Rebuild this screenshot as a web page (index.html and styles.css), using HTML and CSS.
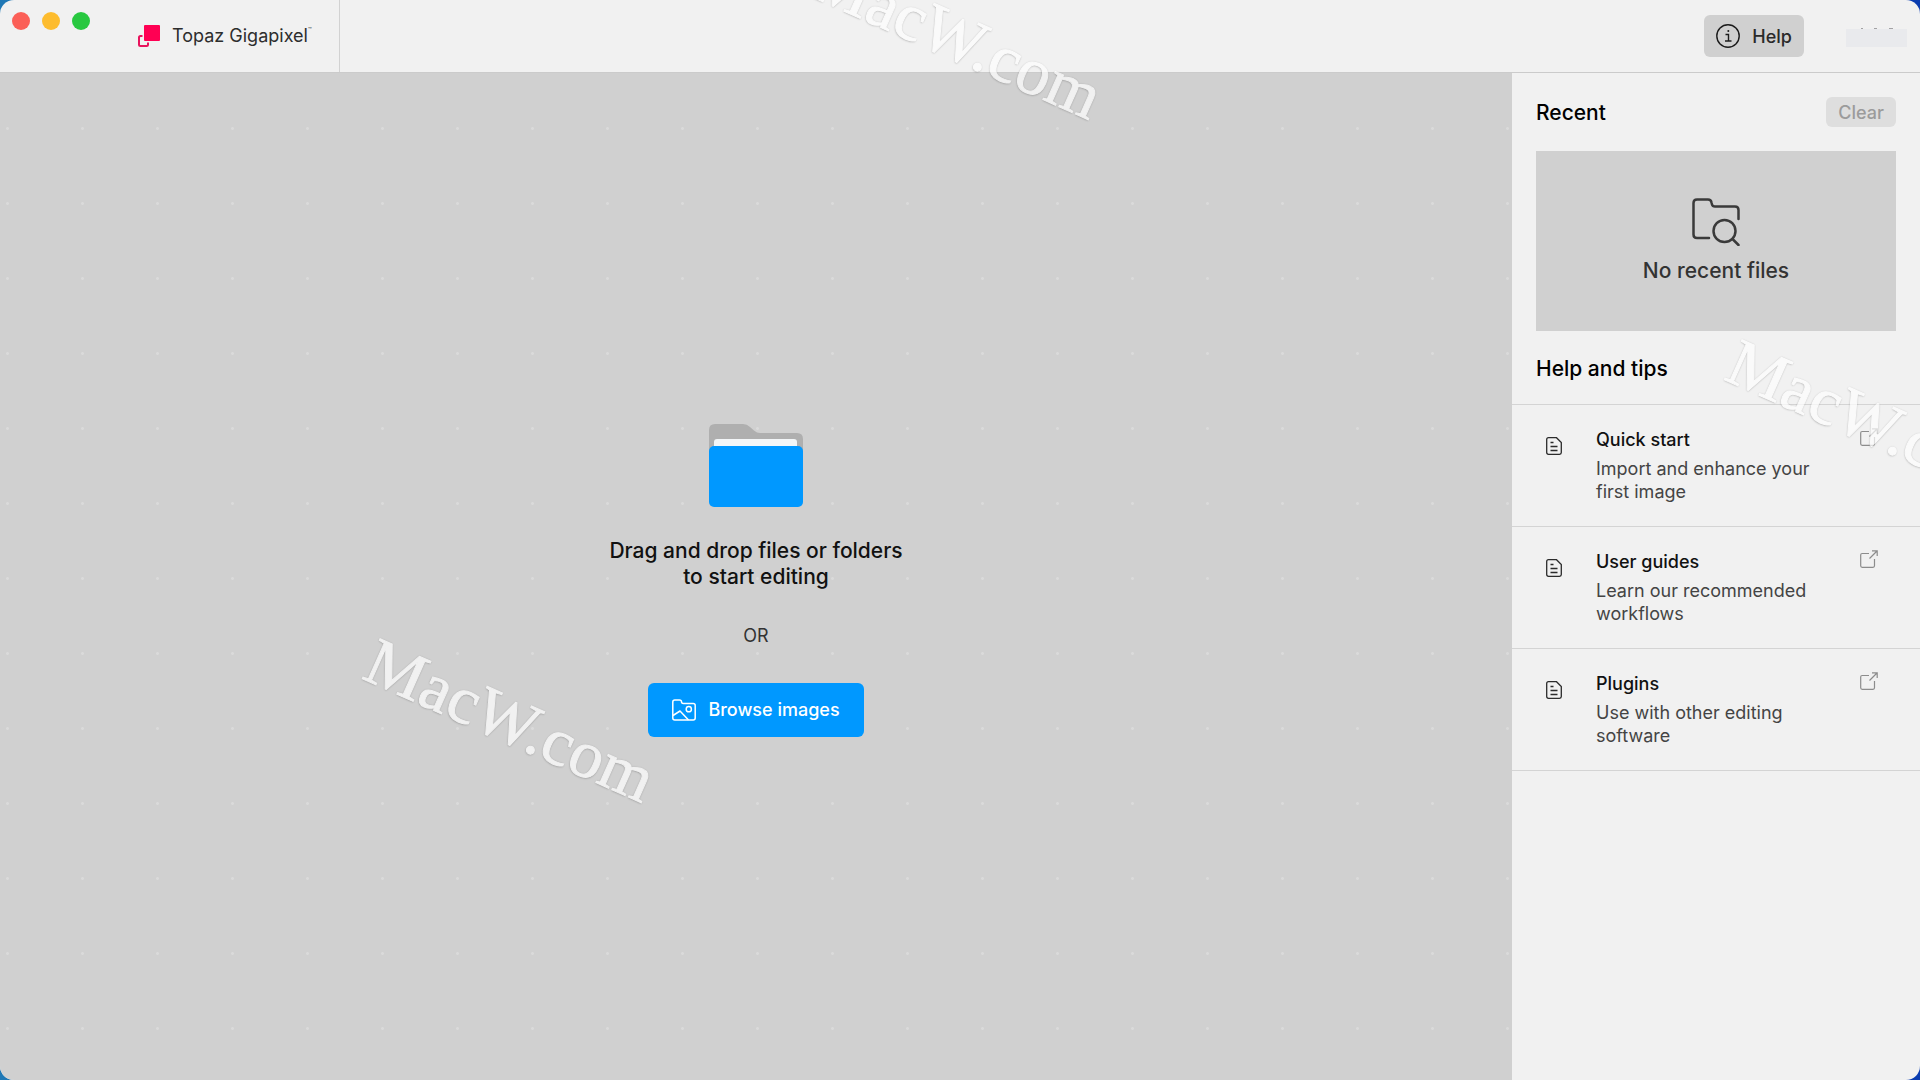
FILE: index.html
```
<!DOCTYPE html>
<html lang="en">
<head>
    <meta charset="UTF-8">
    <meta name="viewport" content="width=device-width, initial-scale=1.0">
    <title>Topaz Gigapixel</title>
    <link rel="stylesheet" href="styles.css">
</head>
<body>
    <div class="window">
        <header class="titlebar">
            <div class="brand">
                <div class="lights">
                    <button class="light close" aria-label="Close"></button>
                    <button class="light minimize" aria-label="Minimize"></button>
                    <button class="light zoom" aria-label="Zoom"></button>
                </div>
                <svg class="logo" width="22" height="22" viewBox="0 0 22 22" aria-hidden="true">
                    <path d="M4.5 11H2.500Q1 11 1 12.500V19.500Q1 21 2.500 21H8.500Q10 21 10 19.500V17.500" fill="none" stroke="#e8135c" stroke-width="2"/>
                    <rect x="6" y="0" width="16" height="16" rx="1" fill="#ff0053"/>
                </svg>
                <h1 class="app-name">Topaz Gigapixel<span class="tm">™</span></h1>
            </div>
            <div class="actions">
                <button class="help-button">
                    <svg width="24" height="24" viewBox="0 0 24 24" fill="none" stroke="#1c1c1c" stroke-width="1.4" aria-hidden="true">
                        <circle cx="12" cy="12" r="11.200"/>
                        <path d="M9.500 10.500H12.500V16.700M9 17H15.500"/>
                        <circle cx="12.300" cy="7" r="1" fill="#1c1c1c" stroke="none"/>
                    </svg>
                    Help
                </button>
                <svg class="account" width="62" height="22" viewBox="0 0 62 22" aria-hidden="true">
                    <rect y="4" width="61" height="18" fill="#e9eaed"/>
                    <path d="M15 3.500H17M28 3.500H31M43 3.500H47" stroke="#a2a2a4" stroke-width="1"/>
                </svg>
            </div>
        </header>

        <div class="content">
            <main class="canvas">
                <svg class="folder" width="94" height="83" viewBox="0 0 94 83" aria-hidden="true">
                    <path d="M0 30V6Q0 0 6 0H34Q38 0 41 3L45 6.500Q48 9 51 9H88Q94 9 94 15V30Z" fill="#afafaf"/>
                    <path d="M5 30V18Q5 15 8 15H85Q88 15 88 18V30Z" fill="#f3f6f8"/>
                    <rect y="22" width="94" height="61" rx="5" fill="#0098ff"/>
                </svg>
                <p class="drop-text">Drag and drop files or folders<br>to start editing</p>
                <p class="or">OR</p>
                <button class="browse-button">
                    <svg width="24" height="22" viewBox="0 0 24 22" fill="none" stroke="#fff" stroke-width="1.5" stroke-linejoin="round" aria-hidden="true">
                        <path d="M.8 19V3Q.8 1 2.800 1H7.500Q9.500 1 9.500 2.800Q9.500 4.500 11.300 4.500H21.200Q23.200 4.500 23.200 6.500V19Q23.200 21 21.200 21H2.800Q.8 21 .8 19Z"/>
                        <path d="M1 16.500L8 12L16.500 21"/>
                        <circle cx="16.800" cy="10.200" r="2.600"/>
                    </svg>
                    Browse images
                </button>
            </main>

            <aside class="sidebar">
                <section class="recent">
                    <div class="recent-header">
                        <h2>Recent</h2>
                        <button class="clear-button" disabled>Clear</button>
                    </div>
                    <div class="recent-empty">
                        <svg width="48" height="48" viewBox="0 0 48 48" fill="none" stroke="#3a3a3a" stroke-width="2.500" stroke-linecap="round" stroke-linejoin="round" aria-hidden="true">
                            <path d="M17 40H5Q1.500 40 1.500 36.500V5Q1.500 1.500 5 1.500H16Q19 1.500 19.500 4.500L20 6.500Q20.500 8.500 23 8.500H43Q46.500 8.500 46.500 12V21"/>
                            <circle cx="32.500" cy="33" r="11"/>
                            <path d="M40.500 41L46.500 47"/>
                        </svg>
                        <p>No recent files</p>
                    </div>
                </section>

                <h2 class="tips-title">Help and tips</h2>
                <nav class="tips">
                    <a class="tip" href="#quick-start">
                        <svg class="doc-icon" width="16" height="18" viewBox="0 0 16 18"><use href="#doc"/></svg>
                        <div class="tip-text">
                            <h3>Quick start</h3>
                            <p>Import and enhance your first image</p>
                        </div>
                        <svg class="open-icon" width="18" height="18" viewBox="0 0 18 18"><use href="#open"/></svg>
                    </a>
                    <a class="tip" href="#user-guides">
                        <svg class="doc-icon" width="16" height="18" viewBox="0 0 16 18"><use href="#doc"/></svg>
                        <div class="tip-text">
                            <h3>User guides</h3>
                            <p>Learn our recommended workflows</p>
                        </div>
                        <svg class="open-icon" width="18" height="18" viewBox="0 0 18 18"><use href="#open"/></svg>
                    </a>
                    <a class="tip" href="#plugins">
                        <svg class="doc-icon" width="16" height="18" viewBox="0 0 16 18"><use href="#doc"/></svg>
                        <div class="tip-text">
                            <h3>Plugins</h3>
                            <p>Use with other editing software</p>
                        </div>
                        <svg class="open-icon" width="18" height="18" viewBox="0 0 18 18"><use href="#open"/></svg>
                    </a>
                </nav>
            </aside>
        </div>

        <!-- watermarks float over everything -->
        <span class="watermark mark-top">MacW.com</span>
        <span class="watermark mark-left">MacW.com</span>
        <span class="watermark mark-right">MacW.com</span>
    </div>

    <!-- shared icons -->
    <svg class="sprite" width="0" height="0" aria-hidden="true">
        <symbol id="doc" viewBox="0 0 16 18">
            <path d="M2.500 .7H10.500L15.300 5.500V15.500Q15.300 17.300 13.500 17.300H2.500Q.7 17.300 .7 15.500V2.500Q.7 .7 2.500 .7Z" fill="none" stroke="#2b2b2b" stroke-width="1.300"/>
            <path d="M4.500 5.500H7.500M4.500 9.500H11.500M4.500 13.500H11.500" stroke="#2b2b2b" stroke-width="1.300"/>
        </symbol>
        <symbol id="open" viewBox="0 0 18 18">
            <path d="M9 3.500H2.200Q.7 3.500 .7 5V15.800Q.7 17.300 2.200 17.300H13Q14.500 17.300 14.500 15.800V9" fill="none" stroke="#8c8c8c" stroke-width="1.200"/>
            <path d="M9.500 8.500L17 1M12 .9H17.200V6" fill="none" stroke="#8c8c8c" stroke-width="1.200"/>
        </symbol>
    </svg>
</body>
</html>
```
FILE: styles.css
```
* {
    box-sizing: border-box;
}

body {
    margin: 0;
    font-family: Inter, "Liberation Sans", sans-serif;
    font-size: 18px;
    color: #111;
    background: linear-gradient(90deg, #1f78b5, #0a3cb0);
}

h1, h2, h3, p {
    margin: 0;
}

button {
    font-family: inherit;
    border: none;
    padding: 0;
}

.window {
    position: relative;
    display: flex;
    flex-direction: column;
    min-height: 100vh;
    border-radius: 14px;
    overflow: hidden;
    background-color: #f1f1f1;
}

/* title bar */
.titlebar {
    display: flex;
    justify-content: space-between;
    height: 73px;
    border-bottom: 1px solid #cbcbcb;
}

.brand {
    display: flex;
    align-items: center;
    width: 340px;
    padding-left: 12px;
    border-right: 1px solid #d2d2d2;
}

.lights {
    display: flex;
    gap: 12px;
    align-self: flex-start;
    margin-top: 12px;
    margin-right: 48px;
}

.light {
    width: 18px;
    height: 18px;
    border-radius: 50%;
}

.close {
    background-color: #fb5f57;
}

.minimize {
    background-color: #fdbc2e;
}

.zoom {
    background-color: #28c840;
}

.logo {
    margin-right: 12px;
}

.app-name {
    position: relative;
    font-size: 18px;
    font-weight: 400;
    line-height: 24px;
    color: #2d2d2d;
}

.tm {
    position: absolute;
    left: 100%;
    top: 0;
    font-size: 6px;
    line-height: 12px;
}

.actions {
    display: flex;
    align-items: center;
    gap: 42px;
    padding-right: 12px;
}

.help-button {
    display: flex;
    align-items: center;
    gap: 12px;
    height: 42px;
    padding: 0 12px;
    border-radius: 6px;
    font-size: 18px;
    font-weight: 500;
    color: #2a2a2a;
    background-color: #d0d0d0;
}

/* main area */
.content {
    display: flex;
    flex: 1;
}

.canvas {
    flex: 1;
    display: flex;
    flex-direction: column;
    align-items: center;
    justify-content: center;
    padding-top: 7px;
    background-color: #d0d0d0;
    background-image: radial-gradient(circle, #dadada 1px, transparent 2px);
    background-size: 75px 75px;
    background-position: 45px 18px;
}

.drop-text {
    margin-top: 31px;
    font-size: 21px;
    font-weight: 500;
    line-height: 26px;
    text-align: center;
}

.or {
    margin-top: 34px;
    line-height: 24px;
    color: #333;
}

.browse-button {
    display: flex;
    align-items: center;
    gap: 12px;
    height: 54px;
    margin-top: 35px;
    padding: 0 24px;
    border-radius: 6px;
    font-size: 18px;
    font-weight: 500;
    color: #fff;
    background-color: #0098ff;
}

/* sidebar */
.sidebar {
    width: 408px;
}

.sidebar h2 {
    font-size: 21px;
    font-weight: 500;
    line-height: 32px;
    color: #000;
}

.recent {
    padding: 24px 24px 22px;
}

.recent-header {
    display: flex;
    align-items: flex-start;
    justify-content: space-between;
}

.clear-button {
    height: 30px;
    padding: 0 12px;
    border-radius: 6px;
    font-size: 18px;
    font-weight: 500;
    color: #9b9b9b;
    background-color: #dedede;
}

.recent-empty {
    display: flex;
    flex-direction: column;
    align-items: center;
    justify-content: center;
    gap: 12px;
    height: 180px;
    margin-top: 22px;
    font-size: 21px;
    font-weight: 500;
    line-height: 26px;
    color: #333;
    background-color: #d0d0d0;
}

.tips-title {
    padding: 0 24px;
}

.tips {
    margin-top: 19px;
    border-top: 1px solid #d4d4d4;
}

.tip {
    display: flex;
    padding: 23px 42px 23px 34px;
    border-bottom: 1px solid #d4d4d4;
    text-decoration: none;
}

.tip-text {
    width: 225px;
    margin-left: 34px;
}

.tip h3 {
    font-size: 18px;
    font-weight: 500;
    line-height: 24px;
    color: #111;
}

.tip p {
    margin-top: 5px;
    line-height: 23px;
    color: #444;
}

.doc-icon {
    flex: none;
    margin-top: 9px;
}

.open-icon {
    flex: none;
    margin-left: auto;
}

.sprite {
    position: absolute;
}

/* watermarks */
.watermark {
    position: absolute;
    font-family: "Liberation Serif", serif;
    font-size: 67px;
    line-height: 64px;
    color: #fff;
    -webkit-text-stroke: 1px #fff;
    text-shadow: 0 0 2px rgba(0, 0, 0, 0.3), 0 1px 2px rgba(0, 0, 0, 0.3);
    opacity: 0.7;
    transform: rotate(24deg);
    transform-origin: 0 54px;
    pointer-events: none;
}

.mark-top {
    left: 808px;
    top: -60px;
}

.mark-left {
    left: 361px;
    top: 623px;
}

.mark-right {
    left: 1723px;
    top: 324px;
}
```
